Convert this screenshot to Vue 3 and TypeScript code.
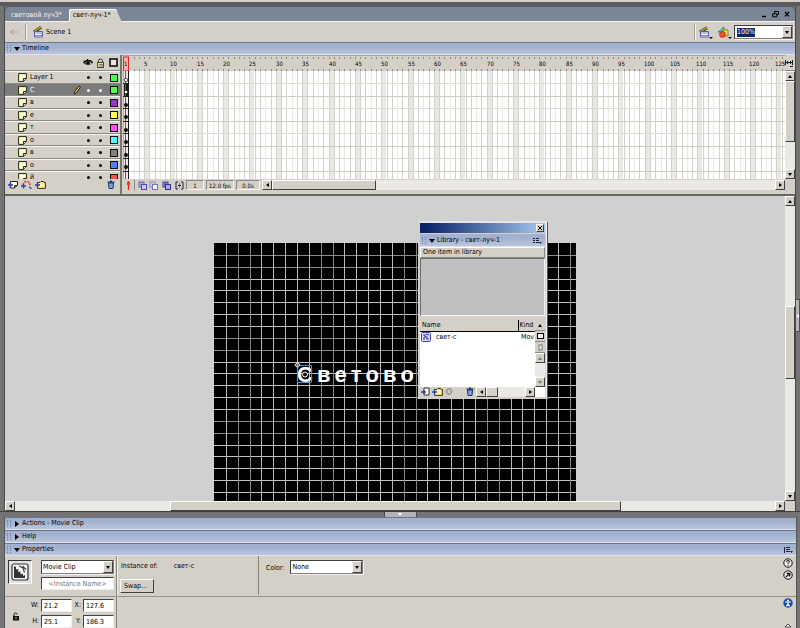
<script setup lang="ts">
import { ref } from 'vue'

interface Layer {
  name: string
  color: string
  selected?: boolean
}

const layers: Layer[] = [
  { name: 'Layer 1', color: '#4fff4f' },
  { name: 'С', color: '#4fff4f', selected: true },
  { name: 'в', color: '#9933cc' },
  { name: 'е', color: '#ffff4f' },
  { name: 'т', color: '#ff4fff' },
  { name: 'о', color: '#4fffff' },
  { name: 'в', color: '#808080' },
  { name: 'о', color: '#4f80ff' },
  { name: 'й', color: '#ff4f4f' },
]

const FRAME = 5.27
const frameX = (n: number) => Math.round((n - 1) * FRAME)
const frames = Array.from({ length: 400 }, (_, i) => i + 1)
const fifths = frames.filter((n) => n % 5 === 0)
const labelled = fifths.filter((n) => n <= 125)
const rowY = [12, 25, 37, 50, 62, 75, 87, 100]
const dotY = [9, 21, 34, 46, 59, 71, 84, 96]

const CELL = 11.86
const gridX = Array.from({ length: 30 }, (_, i) => Math.round((i + 1) * CELL))
const gridY = Array.from({ length: 60 }, (_, i) => Math.round((i + 1) * CELL))

const letters = ['в', 'е', 'т', 'о', 'в', 'о']

const zoom = ref('100%')
const kind = ref('Movie Clip')
const tint = ref('None')
const instanceName = ref('')
const w = ref('21.2')
const h = ref('25.1')
const x = ref('127.6')
const y = ref('186.3')
</script>

<template>
  <div class="app">
    <div class="top-strip"></div>
    <main class="window">
      <header class="titlebar">
        <nav class="tabs">
          <a href="#" class="tab">световой луч3*</a>
          <a href="#" class="tab active">
            <svg class="tab-shape" viewBox="0 0 53 12" preserveAspectRatio="none"><path d="M0 12V2Q0 0 2 0H45Q47 0 48 2L53 12Z" fill="#d4d0c8" /><path d="M.5 12V2Q.5 .5 2 .5H45Q47 .5 48 2" fill="none" stroke="#fff" /></svg>
            <span>свет-луч-1*</span>
          </a>
        </nav>
        <div class="win-buttons">
          <button aria-label="Minimize"><svg width="8" height="8"><path d="M1 6.5H5" stroke="#000" stroke-width="1.4" /></svg></button>
          <button aria-label="Restore"><svg width="8" height="8"><path d="M2.5 3V1.5H6.5V4.5H5M.7 3.8H4.8V6.8H.7Z" fill="none" stroke="#000" /></svg></button>
          <button aria-label="Close"><svg width="8" height="8"><path d="M2 2L6 6.4M6 2L2 6.4" stroke="#000" stroke-width="1.4" /></svg></button>
        </div>
      </header>

      <div class="editbar">
        <button class="flat back" aria-label="Back"><svg width="10" height="8"><path d="M9 4H2M5 1L1.5 4L5 7" stroke="#b8b4ac" stroke-width="1.6" fill="none" /></svg></button>
        <span class="rule"></span>
        <svg width="12" height="12"><path d="M1 6L8 1.2" stroke="#26200a" stroke-width="3" /><path d="M1 5.6L8 1" stroke="#b5a226" stroke-width="1.7" /><path d="M1.5 5.5H9.5V11H1.5Z" fill="#f4f4ff" stroke="#5958b0" /><path d="M2 7H9M2 9.500H9" stroke="#8583d0" /></svg>
        <span class="scene">Scene 1</span>
        <span class="rule right"></span>
        <button class="flat" aria-label="Edit Scene"><svg width="15" height="13"><path d="M1 6L8 1.8" stroke="#26200a" stroke-width="3" /><path d="M1 5.7L8 1.6" stroke="#b5a226" stroke-width="1.7" /><path d="M1.5 5.5H9.5V11H1.5Z" fill="#f4f4ff" stroke="#5958b0" /><path d="M2 7H9M2 9.500H9" stroke="#8583d0" /><path d="M10 11H14L12 13Z" fill="#111" /></svg></button>
        <button class="flat" aria-label="Edit Symbols"><svg width="15" height="13"><path d="M1 6L7 1V6Z" fill="#4fd6b0" stroke="#176" stroke-width=".7" /><path d="M6 4H11V10H6Z" fill="#f5e34a" stroke="#77651c" stroke-width=".8" /><circle cx="5.5" cy="8.5" r="3" fill="#f0502c" stroke="#8a2412" stroke-width=".6" /><path d="M11 11H15L13 13Z" fill="#111" /></svg></button>
        <div class="combo zoom">
          <input v-model="zoom" aria-label="Zoom" class="zoom-input" />
          <button class="drop" aria-label="Zoom levels"><i class="tri down"></i></button>
        </div>
      </div>

      <button class="panel-head"><i class="grip"></i><i class="tri down big"></i>Timeline</button>

      <section class="timeline">
        <div class="layer-side">
          <div class="layer-head">
            <svg width="10" height="9"><path d="M0 5Q5 -1 10 5Q5 9 0 5Z" fill="#4a4a44" /><path d="M0 4.5Q5 0 10 4.5M1 2.5L2 3.6M4.5 1V2M8 2L7.4 3" stroke="#000" fill="none" /><circle cx="5" cy="5" r="1.6" fill="#000" /><circle cx="7.5" cy="5.3" r=".8" fill="#ddd" /></svg>
            <svg width="9" height="10"><path d="M2.5 4.5V2.7Q2.5 1 4.4 1Q6.5 1 6.5 2.7V4.5" fill="none" stroke="#33332c" /><rect x="1.5" y="4.5" width="6" height="5" fill="#dfdf9b" stroke="#444c30" /><path d="M3 6.5H7M3 8H7" stroke="#648" stroke-width=".7" /></svg>
            <svg width="9" height="9"><rect x="1" y="1" width="7" height="7" fill="#e9e6e0" stroke="#000" stroke-width="1.5" /></svg>
          </div>
          <ul class="layers">
            <li v-for="(l, i) in layers" :key="i" :class="{ selected: l.selected }">
              <svg width="9" height="9"><path d="M.6 .6H8.4V5.6L5.6 8.4H.6Z" fill="#ffffd6" stroke="#26260c" /><path d="M5.4 8.2V5.5H8.2" fill="#f6f6f0" stroke="#26260c" /></svg>
              <span class="name">{{ l.name }}</span>
              <span><svg v-if="l.selected" width="8" height="10"><path d="M1.5 9L2 6.5L6 1L7.5 2L3.6 7.6Z" fill="#f5d64a" stroke="#111" stroke-width=".9" /></svg></span>
              <i class="dot"></i>
              <i class="dot"></i>
              <i class="swatch" :style="{ background: l.color }"></i>
            </li>
          </ul>
          <div class="layer-foot">
            <button class="flat" aria-label="Insert Layer"><svg width="10" height="9"><path d="M2.5 1.5H9.5V5L6.5 8H2.5Z" fill="#ffffd6" stroke="#26260c" /><path d="M6.5 8V5.5H9" fill="none" stroke="#26260c" /><path d="M0 5H5M2.5 2.5V7.5" stroke="#2a3fb8" stroke-width="1.5" /></svg></button>
            <button class="flat" aria-label="Add Motion Guide"><svg width="11" height="9"><path d="M2 5Q3 1.5 5.5 1.5Q9 1.5 9 6" fill="none" stroke="#e33" stroke-width="1.6" stroke-dasharray="2 1" /><path d="M0 6H5M2.5 4V8.5M8 7L10.5 8.5" stroke="#2a3fb8" stroke-width="1.4" /></svg></button>
            <button class="flat" aria-label="Insert Layer Folder"><svg width="11" height="9"><path d="M2.5 2.5H5L6 1.5H8.5L9 2.5H10.4V8.4H2.5Z" fill="#fbf29a" stroke="#33300c" /><path d="M0 5H5M2.5 2.5V7.5" stroke="#2a3fb8" stroke-width="1.5" /></svg></button>
            <button class="flat trash" aria-label="Delete Layer"><svg width="8" height="9"><path d="M1.5 3H6.5L6 8.5H2Z" fill="#7aa4dc" stroke="#1f365f" /><path d="M.5 2.2H7.5M3 1H5" stroke="#1f365f" stroke-width="1.2" /></svg></button>
          </div>
        </div>

        <div class="frame-side">
          <div class="frame-grid">
            <svg class="ruler" width="100%" height="15">
              <g stroke="#8d8a83">
                <path v-for="n in frames" :key="n" :d="`M${frameX(n + 1) + 0.5} 1V3M${frameX(n + 1) + 0.5} 13V15`" shape-rendering="crispEdges" />
              </g>
              <rect x=".5" y="1" width="5" height="14" fill="#ffb0ae" stroke="#e0282c" />
              <text x="1" y="10">1</text>
              <text v-for="n in labelled" :key="n" :x="frameX(n) - (n > 99 ? 1 : 0)" y="10">{{ n }}</text>
            </svg>
            <svg class="cells" width="100%" height="108">
              <g shape-rendering="crispEdges">
                <rect v-for="n in fifths" :key="n" :x="frameX(n)" y="0" width="5" height="108" fill="#eae8e4" />
                <path v-for="n in frames" :key="n" :d="`M${frameX(n + 1) + 0.5} 0V108`" :stroke="n % 5 === 2 ? '#eae9e4' : '#d3d1ca'" />
                <path v-for="(r, i) in rowY" :key="r" :d="`M0 ${r + 0.5}H3000`" :stroke="i % 2 ? '#cfcdc1' : '#dddbd3'" />
                <rect x="0" y="0" width="5" height="108" fill="#f4e6e4" />
                <rect x="0" y="13" width="5" height="12" fill="#151515" />
                <path d="M5.5 0V108" stroke="#1a1a1a" />
                <path d="M2.5 0V108" stroke="#e0282c" />
                <path d="M.5 0V108" stroke="#e79a98" />
                <path v-for="r in rowY" :key="'k' + r" :d="`M0 ${r + 0.5}H6`" stroke="#222" />
              </g>
              <circle v-for="(d, i) in dotY" :key="d" cx="3" :cy="d" r="1.7" :fill="i < 2 ? '#fff' : '#111'" stroke="#111" stroke-width=".7" />
            </svg>
          </div>
          <div class="status">
            <button class="flat boxed" aria-label="Center Frame"><svg width="9" height="9"><path d="M4.5 0V9" stroke="#e22" stroke-width="1.3" /><rect x="3" y="1" width="3" height="3" fill="#f33" /></svg></button>
            <button class="flat" aria-label="Onion Skin"><svg width="9" height="9"><rect x="1" y="1" width="5" height="5" fill="#a9a8dc" stroke="#6664b4" /><rect x="3.5" y="3.5" width="5" height="5" fill="#c9c8ee" stroke="#4c4a9c" /></svg></button>
            <button class="flat" aria-label="Onion Skin Outlines"><svg width="9" height="9"><rect x="1" y="1" width="5" height="5" fill="none" stroke="#8a88c4" /><rect x="3.5" y="3.5" width="5" height="5" fill="#eee" stroke="#7674b4" /></svg></button>
            <button class="flat" aria-label="Edit Multiple Frames"><svg width="9" height="9"><rect x="1" y="1" width="5" height="5" fill="#7a78c8" stroke="#4745a0" /><rect x="3.5" y="3.5" width="5" height="5" fill="#a9a8e8" stroke="#33318c" /></svg></button>
            <button class="flat" aria-label="Modify Onion Markers"><svg width="9" height="9"><path d="M3 1H1V8H3M6 1H8V8H6" fill="none" stroke="#223" /><path d="M4 3H5M4 6H5M3 4.5H6" stroke="#223" /></svg></button>
            <span class="cell c1">1</span>
            <span class="cell c2">12.0 fps</span>
            <span class="cell c3">0.0s</span>
            <div class="scroll-h">
              <button class="sb" aria-label="Scroll left"><i class="tri left"></i></button>
              <div class="track"><i class="thumb t-thumb"></i><i class="t-rest"></i></div>
              <button class="sb" aria-label="Scroll right"><i class="tri right"></i></button>
            </div>
          </div>
        </div>

        <div class="v-side">
          <button class="flat frame-view" aria-label="Frame View"><svg width="9" height="10"><path d="M.5 2V7M7.5 2V7M0 4.5H8M2.5 3V6M5.5 3V6M5 8.5H8" stroke="#222" fill="none" /></svg></button>
          <div class="scroll-v">
            <button class="sb" aria-label="Scroll up"><i class="tri up"></i></button>
            <div class="track"><i class="thumb l-thumb"></i><i class="l-rest"></i></div>
            <button class="sb" aria-label="Scroll down"><i class="tri down"></i></button>
          </div>
          <div class="corner"></div>
        </div>
      </section>

      <section class="stage-row">
        <div class="stage">
          <div class="movie">
            <svg width="100%" height="100%" shape-rendering="crispEdges">
              <path v-for="(g, i) in gridY" :key="'h' + g" :d="`M0 ${g + 0.5}H362`" :stroke="i % 7 < 2 ? '#8b8b8b' : '#c2c2c2'" />
              <path v-for="(g, i) in gridX" :key="'v' + g" :d="`M${g + 0.5} 0V800`" :stroke="i % 7 === 1 || i % 7 === 2 ? '#858585' : '#b9b9b9'" />
            </svg>
            <div class="clip">
              <span>С</span>
              <svg class="clip-mark" width="22" height="24"><path d="M4.5 4.5H18.5V21.5H4.5Z" fill="none" stroke="#2a9be0" /><circle cx="12" cy="13.5" r="2.5" fill="#111" stroke="#fff" /><circle cx="4.5" cy="4" r="2" fill="#111" stroke="#ddd" /><path d="M4.5 0V8M1 4H8" stroke="#ddd" stroke-width=".6" /></svg>
            </div>
            <div class="letters"><span v-for="(c, i) in letters" :key="i">{{ c }}</span></div>
          </div>
        </div>
        <div class="scroll-v">
          <button class="sb" aria-label="Scroll up"><i class="tri up"></i></button>
          <div class="track"><i class="s-before"></i><i class="thumb s-thumb"></i><i class="s-after"></i></div>
          <button class="sb" aria-label="Scroll down"><i class="tri down"></i></button>
        </div>
        <button class="collapse side" aria-label="Collapse side panels"><i class="tri left"></i></button>

        <aside class="library">
          <div class="lib-title"><button aria-label="Close library"><svg width="6" height="6"><path d="M1 1L5 5M5 1L1 5" stroke="#000" /></svg></button></div>
          <div class="panel-head lib-head"><i class="grip"></i><i class="tri down big"></i><span>Library - свет-луч-1</span>
            <svg class="menu" width="9" height="8"><path d="M0 1.5H2M3 1.5H6M0 3.5H2M3 3.5H6M0 5.5H2M3 5.5H6" stroke="#223" /><path d="M6 5H9L7.5 7Z" fill="#223" /></svg>
          </div>
          <div class="lib-count">One item in library</div>
          <div class="lib-preview"></div>
          <div class="lib-body">
            <table class="lib-table">
              <thead><tr><th>Name</th><th class="kind">Kind</th></tr></thead>
              <tbody><tr>
                <td><span class="item"><svg width="10" height="10"><rect x=".5" y=".5" width="9" height="9" rx="1" fill="#dcdcff" stroke="#4444b0" /><path d="M2 3H4V5H6V7H8M5 2L8 3M3 5V8" stroke="#3a3aa8" fill="none" stroke-width="1.2" /></svg>свет-с</span></td>
                <td class="kind">Mov</td>
              </tr></tbody>
            </table>
            <div class="lib-side">
              <button aria-label="Sort order"><i class="tri up"></i></button>
              <button aria-label="Wide view"><svg width="7" height="6"><rect x=".5" y=".5" width="6" height="5" fill="#eee" stroke="#000" /></svg></button>
              <button aria-label="Narrow view"><svg width="5" height="7"><rect x="1" y="1" width="3" height="5" fill="#eee" stroke="#777" /></svg></button>
              <button class="raised" aria-label="Scroll up"><i class="tri up grey"></i></button>
              <i class="lib-track"></i>
              <button class="raised" aria-label="Scroll down"><i class="tri down grey"></i></button>
            </div>
          </div>
          <div class="lib-foot">
            <button class="flat" aria-label="New Symbol"><svg width="9" height="9"><path d="M3 1H8V8H3Z" fill="#fff" stroke="#333" /><path d="M0 5H5M3 3V7" stroke="#2a3fb8" stroke-width="1.4" /></svg></button>
            <button class="flat" aria-label="New Folder"><svg width="11" height="9"><path d="M2.5 2.5H5L6 1.5H8.5L9 2.5H10.4V8.4H2.5Z" fill="#fbf29a" stroke="#33300c" /><path d="M0 5H5M2.5 2.5V7.5" stroke="#2a3fb8" stroke-width="1.4" /></svg></button>
            <button class="flat" aria-label="Item Properties"><svg width="8" height="9"><circle cx="4" cy="4.5" r="3" fill="#aaa" stroke="#999" /><path d="M4 3V6" stroke="#eee" /></svg></button>
            <button class="flat lib-trash" aria-label="Delete Item"><svg width="8" height="9"><path d="M1.5 3H6.5L6 8.5H2Z" fill="#7aa4dc" stroke="#1f365f" /><path d="M.5 2.2H7.5M3 1H5" stroke="#1f365f" stroke-width="1.2" /></svg></button>
            <div class="scroll-h">
              <button class="sb" aria-label="Scroll left"><i class="tri left"></i></button>
              <div class="track"><i class="thumb lf-thumb"></i><i class="lf-rest"></i></div>
              <button class="sb" aria-label="Scroll right"><i class="tri right"></i></button>
            </div>
            <i class="lib-corner"></i>
          </div>
        </aside>
      </section>

      <div class="stage-foot">
        <div class="scroll-h">
          <button class="sb" aria-label="Scroll left"><i class="tri left"></i></button>
          <div class="track"><i class="h-before"></i><i class="thumb h-thumb"></i><i class="h-after"></i></div>
          <button class="sb" aria-label="Scroll right"><i class="tri right"></i></button>
        </div>
        <div class="corner"></div>
      </div>
    </main>

    <div class="splitter"><button class="collapse" aria-label="Collapse lower panels"><i class="tri down"></i></button></div>

    <section class="docks">
      <button class="panel-head"><i class="grip"></i><i class="tri right big"></i>Actions - Movie Clip</button>
      <button class="panel-head"><i class="grip"></i><i class="tri right big"></i>Help</button>
      <button class="panel-head"><i class="grip"></i><i class="tri down big"></i>Properties
        <svg class="menu" width="9" height="8"><path d="M.5 1V7M2 1.5H6M2 3.5H6M2 5.5H6" stroke="#223" /><path d="M6 5H9L7.5 7Z" fill="#223" /></svg>
      </button>

      <form class="props" @submit.prevent>
        <div class="props-top">
          <div class="kind-col">
            <span class="symbol"><svg width="18" height="18"><rect x="1" y="1" width="16" height="16" rx="2" fill="#f6f6f6" stroke="#333" stroke-width="1.2" /><path d="M3 3V15H14V12L12 13L12 10.5L9.500 11.5L9.500 8.500L7 9L7.500 6L5 6.500V4Z" fill="#333" /><path d="M8 3L12 5L13.500 9.500M11.500 3L15 6.500" fill="none" stroke="#444" stroke-width="1.200" /></svg></span>
            <div class="kind-fields">
              <div class="combo">
                <select v-model="kind" aria-label="Instance behavior"><option>Movie Clip</option><option>Button</option><option>Graphic</option></select>
                <span class="drop"><i class="tri down"></i></span>
              </div>
              <input v-model="instanceName" class="field name-field" placeholder="&lt;Instance Name&gt;" aria-label="Instance name" />
            </div>
          </div>
          <div class="inst-col">
            <p><span>Instance of:</span><span>свет-с</span></p>
            <button class="swap">Swap...</button>
          </div>
          <div class="color-col">
            <label for="tint">Color:</label>
            <div class="combo">
              <select id="tint" v-model="tint"><option>None</option><option>Brightness</option><option>Tint</option><option>Alpha</option></select>
              <span class="drop"><i class="tri down"></i></span>
            </div>
          </div>
          <div class="help-col">
            <button class="flat" aria-label="Help"><svg width="10" height="10"><circle cx="5" cy="5" r="4.2" fill="#f0eeea" stroke="#111" /><path d="M3.5 4Q3.5 2.5 5 2.5Q6.5 2.5 6.5 3.8Q6.5 4.5 5 5.3V6M5 6.8V7.8" fill="none" stroke="#111" /></svg></button>
            <button class="flat" aria-label="Edit"><svg width="10" height="10"><circle cx="5" cy="5" r="4.2" fill="#f0eeea" stroke="#111" /><path d="M3 7L6 4M3.6 3.3H6.7V6.4" fill="none" stroke="#111" stroke-width="1.3" /></svg></button>
          </div>
        </div>
        <div class="props-bottom">
          <div class="geom">
            <svg class="padlock" width="8" height="9"><path d="M2 4V2.5Q2 1 3.5 1Q5 1 5 2.5" fill="none" stroke="#111" /><rect x="1" y="4" width="6" height="4.5" fill="#111" /><path d="M3 6H5" stroke="#ccc" /></svg>
            <div class="dims">
              <label for="gw">W:</label><input id="gw" v-model="w" class="field" />
              <label for="gx">X:</label><input id="gx" v-model="x" class="field" />
              <label for="gh">H:</label><input id="gh" v-model="h" class="field" />
              <label for="gy">Y:</label><input id="gy" v-model="y" class="field" />
            </div>
          </div>
          <div class="access-col">
            <button class="flat" aria-label="Accessibility"><svg width="10" height="10"><circle cx="5" cy="5" r="4.7" fill="#1546b8" /><circle cx="5" cy="2.4" r="1" fill="#fff" /><path d="M2 4H8M5 4V6L3.3 8.3M5 6L6.7 8.3" stroke="#fff" stroke-width="1.2" fill="none" /></svg></button>
            <button class="flat" aria-label="Collapse"><svg width="8" height="5"><path d="M1 4L4 1L7 4Z" fill="#fff" stroke="#222" stroke-width=".8" /></svg></button>
          </div>
        </div>
      </form>
    </section>
  </div>
</template>

<style>
body { margin: 0; background: #d4d0c8; }
</style>

<style scoped>
* { box-sizing: border-box; }
.app { height: 100vh; display: flex; flex-direction: column; overflow: hidden; background: #747474; color: #000; font: 7px/9px "DejaVu Sans Condensed", "DejaVu Sans", Tahoma, sans-serif; }
button, input, select { font: inherit; color: inherit; margin: 0; padding: 0; border: 0; border-radius: 0; outline: 0; }
button { background: none; }
svg { display: block; flex: none; }
i { display: block; }
.flat { display: flex; flex: none; }
.top-strip { height: 6px; flex: none; background: #5a5a5a; border-top: 2px solid #d4d0c8; }
.window { flex: 1; min-height: 0; display: flex; flex-direction: column; margin: 0 5px; position: relative; box-shadow: -1px 0 #484848, 1px 0 #484848; }

.titlebar { height: 16px; flex: none; display: flex; justify-content: space-between; align-items: flex-end; background: #7b8799; border-radius: 5px 5px 0 0; border-bottom: 1px solid #f4f2ee; box-shadow: inset 0 1px #535d6c; }
.tabs { display: flex; align-items: flex-end; }
.tab { position: relative; height: 12px; line-height: 13px; padding: 0 7px 0 6px; color: #f4f4f4; text-decoration: none; white-space: nowrap; }
.tab.active { color: #000; padding: 0 11px 0 4px; margin-bottom: -1px; height: 13px; }
.tab.active span { position: relative; }
.tab-shape { position: absolute; inset: 0; width: 100%; height: 100%; }
.win-buttons { display: flex; gap: 3px; padding: 0 4px 3px 0; }
.win-buttons button { display: flex; }

.editbar { height: 20px; flex: none; display: flex; align-items: center; background: #d4d0c8; padding: 0 2px 0 4px; }
.back { margin-right: 6px; }
.rule { width: 2px; height: 16px; border-left: 1px solid #a29f98; border-right: 1px solid #f4f2ee; margin-right: 6px; }
.rule.right { margin-left: auto; margin-right: 3px; }
.scene { margin-left: 1px; }
.editbar .flat + .flat { margin: 0 2px 0 3px; }
.combo { display: flex; align-items: center; position: relative; width: 73px; height: 14px; background: #fff; border: 1px solid #808080; border-top-color: #404040; border-left-color: #404040; box-shadow: 1px 1px #f4f2ee; }
.combo select { appearance: none; width: 100%; height: 12px; background: transparent; padding-left: 1px; }
.combo .drop { position: absolute; right: 0; top: 0; pointer-events: none; }
.drop { width: 10px; height: 12px; display: flex; align-items: center; justify-content: center; background: #d4d0c8; border: 1px solid; border-color: #fff #404040 #404040 #fff; }
.zoom { width: 59px; justify-content: space-between; }
.zoom-input { width: 18px; height: 9px; margin-left: 2px; background: #0a246a; color: #fff; }

.panel-head { width: 100%; height: 13px; flex: none; display: flex; align-items: center; text-align: left; background: linear-gradient(#a2b1cf 30%, #b9c5dc); border-top: 1px solid #6d7688; border-bottom: 1px solid #dfe4ec; padding: 0 3px 0 2px; white-space: nowrap; }
.grip { width: 4px; height: 7px; border-left: 1px dotted #6f7f9f; border-right: 1px dotted #6f7f9f; margin-right: 3px; }
.menu { margin-left: auto; }

.tri { width: 0; height: 0; border: 0 solid transparent; flex: none; }
.tri.down { border-width: 3px 2px 0; border-top-color: #000; }
.tri.up { border-width: 0 2px 3px; border-bottom-color: #000; }
.tri.left { border-width: 2px 3px 2px 0; border-right-color: #000; }
.tri.right { border-width: 2px 0 2px 3px; border-left-color: #000; }
.tri.grey { border-top-color: #777; border-bottom-color: #777; }
.tri.big.down { border-width: 4px 3px 0; margin-right: 2px; }
.tri.big.right { border-width: 3px 0 3px 4px; margin: 0 3px 0 1px; }

.scroll-v { width: 10px; display: flex; flex-direction: column; flex: none; background: #ebe9e5; }
.scroll-h { flex: 1; height: 10px; display: flex; background: #ebe9e5; min-width: 0; }
.sb { width: 10px; height: 10px; flex: none; display: flex; align-items: center; justify-content: center; background: #d4d0c8; border: 1px solid; border-color: #fff #404040 #404040 #fff; }
.track { flex: 1; display: flex; min-width: 0; min-height: 0; }
.scroll-v .track { flex-direction: column; }
.thumb { background: #d4d0c8; border: 1px solid; border-color: #fff #404040 #404040 #fff; }
.corner { width: 10px; height: 11px; flex: none; background: #d4d0c8; }

.timeline { height: 141px; flex: none; display: flex; background: #d4d0c8; border-bottom: 2px solid #66675f; }
.layer-side { width: 115px; flex: none; display: flex; flex-direction: column; }
.layer-head { height: 16px; flex: none; display: grid; grid-template-columns: 12px 13px 13px; justify-content: end; align-items: center; justify-items: center; border-bottom: 1px solid #8b8b86; }
.layers { list-style: none; margin: 0; padding: 0; height: 108px; overflow: hidden; }
.layers li { height: 12px; display: grid; grid-template-columns: 9px 1fr 10px 12px 13px 13px; align-items: center; justify-items: center; padding-left: 13px; border-top: 1px solid #f6f4f0; border-bottom: 1px solid #8b8b86; }
.layers li:nth-child(odd) { height: 13px; }
.layers li.selected { background: #7b7b7b; color: #fff; border-top-color: #7b7b7b; }
.name { justify-self: start; padding-left: 3px; }
.dot { width: 3px; height: 3px; border-radius: 50%; background: #000; }
.selected .dot { background: #fff; }
.swatch { width: 8px; height: 8px; border: 1px solid #111; }
.layer-foot { flex: 1; display: flex; align-items: flex-start; padding: 1px 5px 0 3px; gap: 3px; }
.trash { margin-left: auto; }
.frame-side { flex: 1; min-width: 0; display: flex; flex-direction: column; border-left: 2px solid #77776f; }
.frame-grid { overflow: hidden; padding-left: 1px; background: #d4d0c8; border-top: 1px solid #a5a29b; }
.ruler text { font-size: 6px; }
.cells { background: #fff; }
.status { height: 11px; display: flex; align-items: flex-start; padding: 1px 0 0 2px; gap: 2px; }
.status .flat { padding-top: 1px; }
.boxed { border-right: 1px solid #8b8b86; padding-right: 1px; margin-right: 1px; }
.status .flat:nth-child(4) { margin-left: 2px; }
.status .flat:nth-child(5) { margin-left: 2px; }
.cell { height: 10px; text-align: center; font-size: 6px; border: 1px solid; border-color: #8b8b86 #f6f4f0 #f6f4f0 #8b8b86; white-space: nowrap; }
.c1 { width: 18px; }
.c2 { width: 28px; }
.c3 { width: 24px; }
.t-thumb { flex: 102; }
.t-rest { flex: 401; }
.v-side { width: 10px; flex: none; display: flex; flex-direction: column; }
.frame-view { height: 16px; padding-top: 3px; border-bottom: 1px solid #8b8b86; }
.v-side .scroll-v { flex: 1; }
.v-side .corner { height: 15px; }
.l-thumb { flex: 59; }
.l-rest { flex: 27; }

.stage-row { flex: 1; min-height: 0; display: flex; position: relative; }
.stage { flex: 1; min-width: 0; display: flex; justify-content: center; padding-top: 47px; background: #d0d0d0; overflow: hidden; }
.movie { position: relative; width: 362px; flex: none; background: #000; overflow: hidden; color: #fff; font: bold 22px/22px "Liberation Sans", Arial, sans-serif; }
.clip { position: absolute; left: 83px; top: 121px; }
.clip-mark { position: absolute; left: -4px; top: -3px; }
.letters { position: absolute; left: 103px; top: 121px; display: flex; gap: 4px; }
.s-before { flex: 101; }
.s-thumb { flex: 71; }
.s-after { flex: 113; }
.collapse { display: flex; align-items: center; justify-content: center; background: #b4b4b4; border: 1px solid #4c4c4c; }
.collapse .tri.down { border-top-color: #fff; }
.collapse .tri.left { border-right-color: #fff; }
.side { position: absolute; left: 100%; top: 103px; width: 5px; height: 33px; }

.library { position: absolute; left: 413px; top: 25px; width: 130px; height: 178px; display: flex; flex-direction: column; background: #d4d0c8; border: 2px solid #d4d0c8; border-top-color: #e8e6e2; border-right: 1px solid #55534f; box-shadow: inset -1px 0 #f4f2ee; padding-right: 2px; }
.lib-title { height: 10px; flex: none; display: flex; justify-content: flex-end; align-items: center; background: linear-gradient(90deg, #0a246a 5%, #a6caf0); padding-right: 1px; }
.lib-title button { width: 8px; height: 8px; display: flex; align-items: center; justify-content: center; background: #d4d0c8; border: 1px solid; border-color: #fff #404040 #404040 #fff; }
.lib-head { margin-top: 1px; border-top-color: #a2b1cf; }
.lib-count { height: 11px; flex: none; padding: 0 2px; line-height: 8px; border: 1px solid; border-color: #fff #8b8b86 #8b8b86 #fff; }
.lib-preview { height: 58px; flex: none; background: #c0c0c0; border: 1px solid; border-color: #6c6c6c #f6f4f0 #f6f4f0 #6c6c6c; }
.lib-body { flex: 1; min-height: 0; margin-top: 4px; display: flex; background: #fff; overflow: hidden; }
.lib-table { flex: 1; min-width: 0; width: 0; height: 23px; table-layout: fixed; border-collapse: collapse; }
.lib-table th { height: 11px; padding: 0 2px; text-align: left; font-weight: normal; background: #d4d0c8; border-bottom: 1px solid #000; }
.lib-table .kind { width: 17px; padding: 0; white-space: nowrap; }
.lib-table th.kind { border-left: 1px solid #000; padding-left: 1px; }
.lib-table td { padding: 0 1px; height: 11px; }
.item { display: flex; align-items: center; gap: 5px; }
.lib-table td.kind { padding-left: 3px; }
.lib-side { width: 10px; flex: none; display: flex; flex-direction: column; background: #ebe9e5; }
.lib-side button { height: 11px; flex: none; display: flex; align-items: center; justify-content: center; background: #d4d0c8; border-bottom: 1px solid #8b8b86; }
.lib-side .raised { height: 10px; border: 1px solid; border-color: #fff #404040 #404040 #fff; }
.lib-track { flex: 1; }
.lib-foot { height: 10px; flex: none; display: flex; gap: 2px; padding-left: 1px; }
.lib-trash { margin-left: 11px; }
.lf-thumb { flex: 11; }
.lf-rest { flex: 30; }
.lib-corner { width: 10px; margin-left: -2px; background: #fff; }

.stage-foot { height: 10px; flex: none; display: flex; background: #d4d0c8; }
.stage-foot .corner { height: 10px; }
.h-before { flex: 155; }
.h-thumb { flex: 451; }
.h-after { flex: 154; }
.splitter { height: 6px; flex: none; display: flex; justify-content: center; border-top: 1px solid #404040; }
.splitter .collapse { width: 33px; height: 5px; border-width: 0 1px; }

.docks { flex: none; margin: 0 4px 0 5px; box-shadow: -1px 0 #555, 1px 0 #555; background: #d4d0c8; }
.props-top { height: 41px; display: flex; border-bottom: 1px solid #96938c; }
.kind-col { width: 112px; display: flex; gap: 9px; padding: 4px 0 0 3px; border-right: 1px solid #85837d; box-shadow: 1px 0 #f4f2ee; }
.symbol { width: 24px; height: 24px; display: flex; align-items: center; justify-content: center; background: #e4e2de; border: 1px solid; border-color: #333 #fff #fff #333; }
.kind-fields { display: flex; flex-direction: column; gap: 3px; }
.field { width: 31px; height: 13px; background: #fff; border: 1px solid; border-color: #404040 #eee #eee #404040; padding: 0 2px; }
.name-field { width: 73px; text-align: center; }
.name-field::placeholder { color: #777; opacity: 1; }
.inst-col { width: 142px; padding: 6px 0 0 3px; border-right: 1px solid #85837d; margin-bottom: 1px; }
.inst-col p { margin: 0 0 8px 1px; display: flex; gap: 16px; }
.swap { width: 34px; height: 14px; background: #d4d0c8; border: 1px solid; border-color: #fff #404040 #404040 #fff; text-align: left; padding-left: 3px; }
.color-col { display: flex; align-items: flex-start; gap: 6px; padding: 4px 0 0 7px; }
.color-col label { padding-top: 4px; }
.help-col { margin-left: auto; padding: 2px 3px 0 0; display: flex; flex-direction: column; gap: 2px; }
.props-bottom { display: flex; height: 31px; }
.geom { width: 112px; display: flex; align-items: center; border-right: 1px solid #85837d; padding-left: 7px; }
.padlock { margin-top: 8px; }
.dims { display: grid; grid-template-columns: 21px 31px 11px 31px; row-gap: 3px; padding-top: 2px; align-self: flex-start; }
.dims label { text-align: right; padding: 2px 2px 0 0; }
.access-col { margin-left: auto; padding: 1px 3px 0 0; display: flex; flex-direction: column; align-items: center; justify-content: space-between; }
</style>
